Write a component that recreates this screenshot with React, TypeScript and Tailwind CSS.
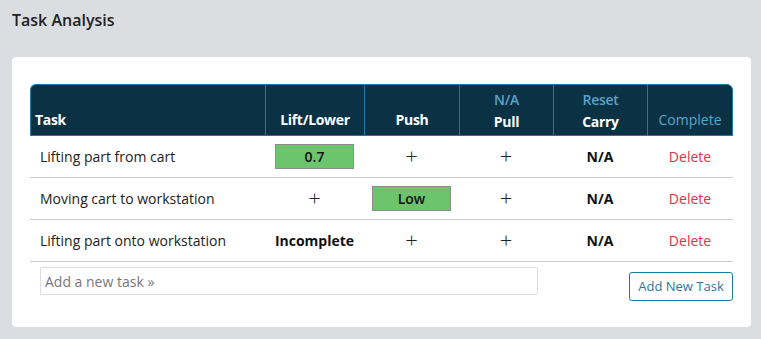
import React from "react"

type Row = {
  name: string
  lift: React.ReactNode
  push: React.ReactNode
  pull: React.ReactNode
  carry: React.ReactNode
}

function Score({ value }: { value: string }) {
  return (
    <div className="mx-auto flex h-[25px] w-[79px] items-center justify-center border border-[#8c8c8c] bg-[#6cc46c] text-[14px] font-semibold text-[#111]">
      {value}
    </div>
  )
}

const Plus = () => <span className="text-[22px] font-light leading-none text-[#222]">+</span>
const NA = () => <span className="text-[14px] font-bold text-[#111]">N/A</span>

const rows: Row[] = [
  { name: "Lifting part from cart", lift: <Score value="0.7" />, push: <Plus />, pull: <Plus />, carry: <NA /> },
  { name: "Moving cart to workstation", lift: <Plus />, push: <Score value="Low" />, pull: <Plus />, carry: <NA /> },
  { name: "Lifting part onto workstation", lift: <span className="text-[14px] font-bold text-[#111]">Incomplete</span>, push: <Plus />, pull: <Plus />, carry: <NA /> },
]

const th = "border-t border-b border-l border-[#1b7ba6] bg-[#0a3144] align-bottom"

export default function App() {
  return (
    <div className="h-[339px] w-[761px] bg-[#dcdde1] px-3 pt-[8px] font-['Open_Sans',sans-serif]">
      <h1 className="text-[16px] font-semibold leading-[24px] text-[#222]">Task Analysis</h1>
      <div className="mt-[25px] h-[270px] w-[739px] rounded-[4px] bg-white px-[18px] pt-[27px]">
        <table className="w-[703px] table-fixed border-separate border-spacing-0">
          <colgroup>
            <col className="w-[235px]" />
            <col className="w-[99px]" />
            <col className="w-[95px]" />
            <col className="w-[94px]" />
            <col className="w-[94px]" />
            <col className="w-[86px]" />
          </colgroup>
          <thead>
            <tr className="h-[52px] text-[14px] font-bold leading-[22px] tracking-[-0.3px] text-white">
              <th className={`${th} rounded-tl-[6px] pb-[4px] pl-[4px] text-left`}>Task</th>
              <th className={`${th} pb-[4px] text-center`}>Lift/Lower</th>
              <th className={`${th} pb-[4px] text-center`}>Push</th>
              <th className={`${th} pb-[2px] text-center`}>
                <div className="font-semibold text-[#5aa3c8]">N/A</div>
                <div>Pull</div>
              </th>
              <th className={`${th} pb-[2px] text-center`}>
                <div className="font-semibold text-[#5aa3c8]">Reset</div>
                <div>Carry</div>
              </th>
              <th className={`${th} rounded-tr-[6px] border-r pb-[4px] text-center font-normal tracking-normal text-[#5aa6cc]`}>Complete</th>
            </tr>
          </thead>
          <tbody>
            {rows.map((r) => (
              <tr key={r.name} className="h-[42px] text-[14px] text-[#222]">
                <td className="border-b border-[#cccccc] pl-[10px]">{r.name}</td>
                <td className="border-b border-[#cccccc] text-center">{r.lift}</td>
                <td className="border-b border-[#cccccc] text-center">{r.push}</td>
                <td className="border-b border-[#cccccc] text-center">{r.pull}</td>
                <td className="border-b border-[#cccccc] text-center">{r.carry}</td>
                <td className="border-b border-[#cccccc] text-center text-[#e2304d]">Delete</td>
              </tr>
            ))}
          </tbody>
        </table>
        <div className="mt-[5px] flex items-start justify-between pl-[10px]">
          <input
            placeholder="Add a new task »"
            className="h-[28px] w-[498px] rounded-[2px] border border-[#dddddd] px-[4px] text-[14px] text-[#222] outline-none placeholder:text-[#777]"
          />
          <button className="mt-[5px] h-[29px] w-[104px] rounded-[3px] border border-[#1a7aa8] bg-white text-[13px] text-[#2778a3]">
            Add New Task
          </button>
        </div>
      </div>
    </div>
  )
}
